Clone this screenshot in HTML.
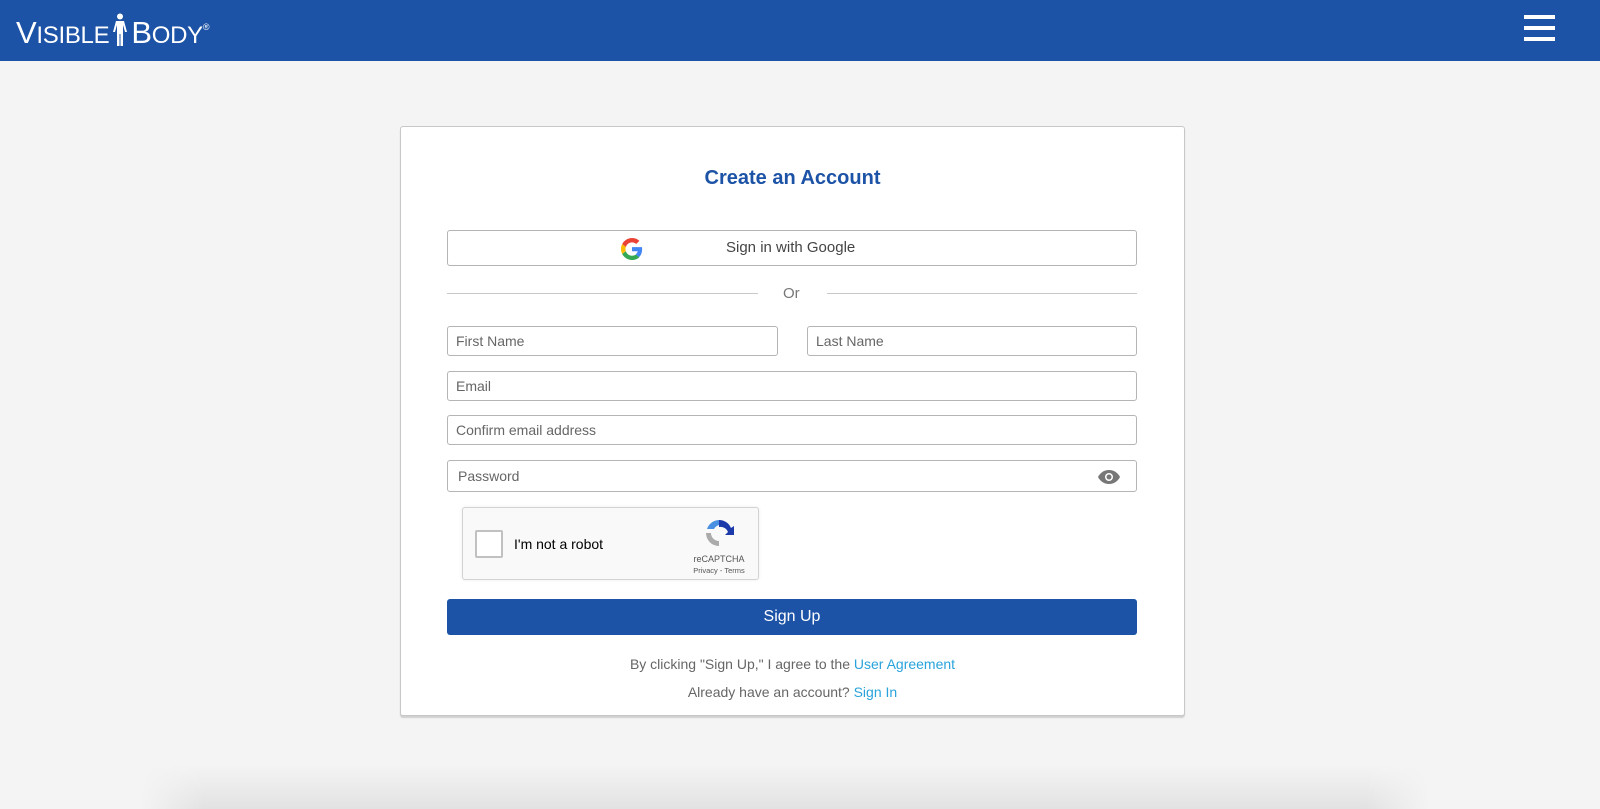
<!DOCTYPE html>
<html><head><style>
*{box-sizing:border-box;margin:0;padding:0}
html,body{width:1600px;height:809px;overflow:hidden}
body{background:#f4f4f4;font-family:"Liberation Sans",Arial,sans-serif;position:relative}
.hdr{position:absolute;left:0;top:0;width:1600px;height:61px;background:#1c53a6}
.logo{position:absolute;left:16px;top:13px;color:#fff;font-size:31px;letter-spacing:-0.3px;white-space:nowrap}
.logo .s{font-size:24px}
.burger{position:absolute;left:1524px;top:15px;width:31px}
.burger div{height:4px;background:#fff;margin-bottom:7px}
.card{position:absolute;left:400px;top:126px;width:785px;height:590px;background:#fff;border:1px solid #c8c8c8;border-radius:3px;box-shadow:0 2px 1px #d0d0d0}
.abs{position:absolute}
h1{position:absolute;left:0;width:100%;top:40px;text-align:center;color:#1c53a6;font-size:20px;font-weight:bold}
.inp{position:absolute;border:1px solid #b5b5b5;border-radius:3px;height:30px;font-size:14px;color:#666;padding-left:8px;line-height:28px;background:#fff}
.t{position:absolute;width:100%;text-align:center;font-size:14px;color:#666}
a{color:#29a3db;text-decoration:none}
.shadow{position:absolute;left:140px;top:765px;width:1290px;height:44px;background:linear-gradient(rgba(0,0,0,0),rgba(0,0,0,0.07));-webkit-mask-image:linear-gradient(90deg,transparent,#000 5%,#000 95%,transparent);mask-image:linear-gradient(90deg,transparent,#000 5%,#000 95%,transparent)}
</style></head><body>
<div class="hdr">
<div class="logo">V<span class="s">ISIBLE</span><svg width="20" height="34" viewBox="0 0 20 34" style="vertical-align:-4px;margin:0 1px"><circle cx="10" cy="3.5" r="3" fill="#fff"/><path d="M6 8h8l3 11-2 0-2-7v21h-2.5v-12h-1v12H7V12l-2 7H3z" fill="#fff"/></svg>B<span class="s">ODY</span><sup style="font-size:9px;vertical-align:13px">®</sup></div>
<div class="burger"><div></div><div></div><div></div></div>
</div>
<div class="shadow"></div>
<div class="card">
<h1>Create an Account</h1>
<div class="abs" style="left:46px;top:103px;width:690px;height:36px;border:1px solid #b5b5b5;border-radius:3px;font-size:15px;color:#444;line-height:34px">
<svg class="abs" style="left:173px;top:7px" width="22" height="22" viewBox="0 0 48 48"><path fill="#EA4335" d="M24 9.5c3.5 0 6.7 1.2 9.2 3.6l6.9-6.9C35.9 2.4 30.5 0 24 0 14.6 0 6.6 5.4 2.6 13.3l8 6.2C12.5 13.7 17.8 9.5 24 9.5z"/><path fill="#4285F4" d="M46.1 24.5c0-1.6-.1-3.1-.4-4.5H24v9h12.4c-.5 2.9-2.2 5.3-4.6 7l7.5 5.8c4.4-4 6.8-10 6.8-17.3z"/><path fill="#FBBC05" d="M10.5 28.6c-.5-1.4-.8-3-.8-4.6s.3-3.2.8-4.6l-8-6.2C.9 16.5 0 20.1 0 24s.9 7.5 2.6 10.8l7.9-6.2z"/><path fill="#34A853" d="M24 48c6.5 0 11.9-2.1 15.9-5.8l-7.5-5.8c-2.1 1.4-4.8 2.3-8.4 2.3-6.2 0-11.5-4.2-13.4-9.9l-8 6.2C6.6 42.6 14.6 48 24 48z"/></svg>
<span class="abs" style="left:278px">Sign in with Google</span></div>
<div class="abs" style="left:46px;top:166px;width:311px;height:1px;background:#c8c8c8"></div>
<div class="abs" style="left:426px;top:166px;width:310px;height:1px;background:#c8c8c8"></div>
<div class="abs" style="left:382px;top:158px;font-size:15px;color:#777">Or</div>
<div class="inp" style="left:46px;top:199px;width:331px">First Name</div>
<div class="inp" style="left:406px;top:199px;width:330px">Last Name</div>
<div class="inp" style="left:46px;top:244px;width:690px">Email</div>
<div class="inp" style="left:46px;top:288px;width:690px">Confirm email address</div>
<div class="inp" style="left:46px;top:333px;width:690px;height:32px;line-height:30px;padding-left:10px">Password
<svg class="abs" style="left:650px;top:9px" width="22" height="14" viewBox="0 0 22 14"><path d="M11 0C6 0 2 3 0 7c2 4 6 7 11 7s9-3 11-7c-2-4-6-7-11-7z" fill="#777"/><circle cx="11" cy="7" r="4" fill="#fff"/><circle cx="11" cy="7" r="2.5" fill="#777"/></svg></div>
<div class="abs" style="left:61px;top:380px;width:297px;height:73px;background:#f9f9f9;border:1px solid #d3d3d3;border-radius:3px;box-shadow:0 0 3px rgba(0,0,0,.08)">
<div class="abs" style="left:12px;top:22px;width:28px;height:28px;border:2px solid #c1c1c1;border-radius:2px;background:#fff"></div>
<div class="abs" style="left:51px;top:28px;font-size:14px;color:#000">I'm not a robot</div>
<svg class="abs" style="left:240px;top:9px" width="32" height="32" viewBox="0 0 32 32"><path d="M16 3a13 13 0 0 1 12 8l3-2v9h-9l3-3a8 8 0 0 0-9-5z" fill="#1c3aa9"/><path d="M16 3a13 13 0 0 0-12 9h7a8 8 0 0 1 5-4z" fill="#4a90e2"/><path d="M3 16a13 13 0 0 0 13 13v-5a8 8 0 0 1-8-8z" fill="#ababab"/></svg>
<div class="abs" style="left:218px;top:46px;font-size:9px;color:#555;width:76px;text-align:center">reCAPTCHA</div>
<div class="abs" style="left:218px;top:58px;font-size:7.5px;color:#555;width:76px;text-align:center">Privacy - Terms</div>
</div>
<div class="abs" style="left:46px;top:472px;width:690px;height:36px;background:#1c53a6;border-radius:3px;color:#fff;font-size:16px;text-align:center;line-height:36px">Sign Up</div>
<div class="t" style="top:529px">By clicking "Sign Up," I agree to the <a>User Agreement</a></div>
<div class="t" style="top:557px">Already have an account? <a>Sign In</a></div>
</div>
</body></html>
